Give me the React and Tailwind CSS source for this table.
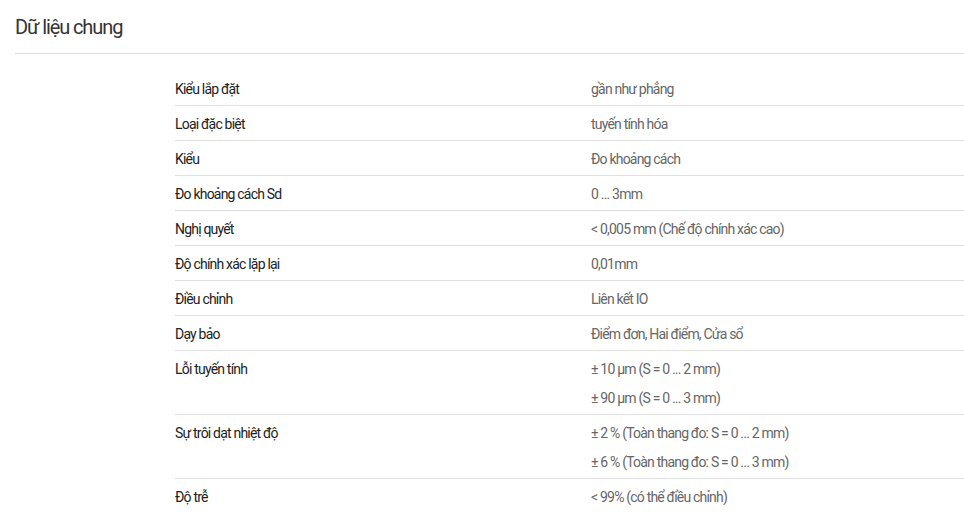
/* data */
const rows = [
  { label: 'Kiểu lắp đặt', values: ['gần như phẳng'] },
  { label: 'Loại đặc biệt', values: ['tuyến tính hóa'] },
  { label: 'Kiểu', values: ['Đo khoảng cách'] },
  { label: 'Đo khoảng cách Sd', values: ['0 ... 3mm'] },
  { label: 'Nghị quyết', values: ['< 0,005 mm (Chế độ chính xác cao)'] },
  { label: 'Độ chính xác lặp lại', values: ['0,01mm'] },
  { label: 'Điều chỉnh', values: ['Liên kết IO'] },
  { label: 'Dạy bảo', values: ['Điểm đơn, Hai điểm, Cửa sổ'] },
  { label: 'Lỗi tuyến tính', values: ['± 10 µm (S = 0 ... 2 mm)', '± 90 µm (S = 0 ... 3 mm)'] },
  { label: 'Sự trôi dạt nhiệt độ', values: ['± 2 % (Toàn thang đo: S = 0 ... 2 mm)', '± 6 % (Toàn thang đo: S = 0 ... 3 mm)'] },
  { label: 'Độ trễ', values: ['< 99% (có thể điều chỉnh)'] },
];

export default function App() {
  return (
    <div className="min-h-[525px] bg-white pl-[15px] font-['Roboto',sans-serif]">
      {/* heading */}
      <h2 className="flex h-[54px] items-center border-b border-[#e0e0e0] text-[20px] tracking-[-1.1px] text-[#333]">
        Dữ liệu chung
      </h2>

      {/* table */}
      <div className="ml-[160px] pt-[17px] text-[14px] tracking-[-0.8px]">
        {rows.map((row, i) => (
          <div
            key={row.label}
            className={`grid grid-cols-[416px_1fr] ${i < rows.length - 1 ? 'border-b border-[#e0e0e0]' : ''} pt-[8px] pb-[6px]`}
          >
            <div className="leading-[20px] text-[#222]">{row.label}</div>
            <div className="flex flex-col gap-[9px] text-[#666]">
              {row.values.map((v) => (
                <span key={v} className="leading-[20px]">{v}</span>
              ))}
            </div>
          </div>
        ))}
      </div>
    </div>
  );
}
